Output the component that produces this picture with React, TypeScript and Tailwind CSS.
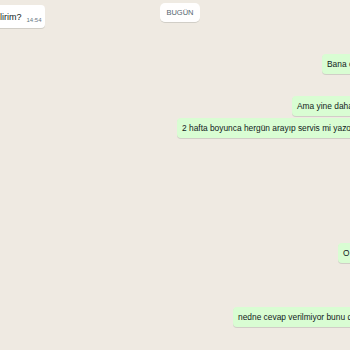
import React from "react";

const font = { fontFamily: '"Liberation Sans", Arial, sans-serif' };

function Out({ text, left, mt }: { text: string; left: string; mt: string }) {
  return (
    <div className={`flex ${left} ${mt}`}>
      <div className="h-[20px] flex items-center whitespace-nowrap bg-[#d9fdd3] rounded-[4px] pl-[5px] pr-[40px] text-[8.4px] text-[#111b21] shadow-[0_1px_0.5px_rgba(11,20,26,0.13)]">
        {text}
      </div>
    </div>
  );
}

export default function App() {
  return (
    <div
      className="relative w-[350px] h-[350px] overflow-hidden bg-[#efeae2]"
      style={font}
    >
      <div className="flex flex-col">
        <div className="flex mt-[5px]">
          <div className="-ml-[8px] h-[23px] w-[53px] bg-white rounded-[4px] flex items-start pl-[8px] pt-[6px] shadow-[0_1px_0.5px_rgba(11,20,26,0.13)]">
            <span className="text-[9px] text-[#111b21] leading-[12px]">lirim?</span>
            <span className="ml-[5px] mt-[5px] text-[6px] text-[#667781] leading-[8px]">14:54</span>
          </div>
        </div>
        <Out text="Bana cevap verin lütfen" left="pl-[322px]" mt="mt-[26px]" />
        <Out text="Ama yine daha cevap yok" left="pl-[292px]" mt="mt-[22px]" />
        <Out text="2 hafta boyunca hergün arayıp servis mi yazok" left="pl-[177px]" mt="mt-[2px]" />
        <Out text="O" left="pl-[338px]" mt="mt-[105px]" />
        <Out text="nedne cevap verilmiyor bunu da" left="pl-[233px]" mt="mt-[44px]" />
      </div>
      <div className="absolute left-[160px] top-[3px] w-[40px] h-[19px] bg-white/95 rounded-[5px] flex items-center justify-center text-[7.5px] text-[#54656f] shadow-[0_1px_0.5px_rgba(11,20,26,0.13)]">
        BUGÜN
      </div>
    </div>
  );
}
